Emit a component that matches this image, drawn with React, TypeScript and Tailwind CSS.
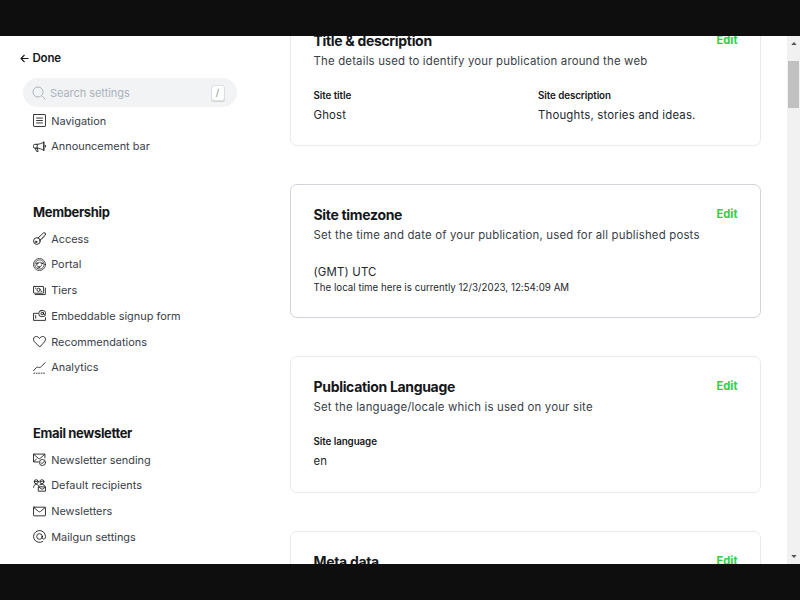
import type { ReactNode } from 'react';

function Icon({ children }: { children: ReactNode }) {
  return (
    <svg viewBox="0 0 24 24" className="h-[13px] w-[13px] shrink-0" fill="none" stroke="#15171a" strokeWidth="1.6" strokeLinecap="round" strokeLinejoin="round">
      {children}
    </svg>
  );
}

const icons: Record<string, ReactNode> = {
  navigation: (
    <>
      <rect x="1" y="1" width="22" height="22" rx="1" />
      <path d="M6.5 7.5h11M6.5 12h11M6.5 16.5h11" />
    </>
  ),
  megaphone: (
    <>
      <path d="M7 8H3.2a2.4 2.4 0 0 0-2.4 2.4v2.2A2.4 2.4 0 0 0 3.2 15H7zM7 8c4.5 0 9-1.5 13-4.3v15.6C16 16.5 11.5 15 7 15M20 3.7v15.6M23 10v3M4 15l2.6 6h3L7.7 15" />
    </>
  ),
  key: (
    <>
      <circle cx="7.2" cy="16.7" r="6.2" />
      <circle cx="5.6" cy="18.3" r="1.5" />
      <path d="M9.5 10.8 19.5 1.5l3.2.3.3 3.7-2.2 1.4-.6 2.500-2.500.6-.7 2.400-2.500.6-1.800 2" />
    </>
  ),
  portal: (
    <g strokeWidth="1.3">
      <circle cx="12" cy="12" r="11.2" />
      <circle cx="12" cy="12" r="8.6" strokeDasharray="5 1.75" />
      <path d="M9 8.500c1.500-1.200 4.500-1.200 6 0M15.700 13.500c0 2-2 3.500-4 3M8 15.500c-1.200-1-1.500-2.500-.8-4" />
      <circle cx="16.500" cy="10" r="1.400" />
      <circle cx="7.500" cy="10" r="1.400" />
      <circle cx="10.500" cy="17" r="1.400" />
    </g>
  ),
  tiers: (
    <>
      <rect x="1" y="4.500" width="18.500" height="12.500" rx="1" />
      <path d="M22.800 7.500v12H4M4.500 7.800h1M15 13.700h1" />
      <circle cx="10.300" cy="10.700" r="3" />
    </>
  ),
  embed: (
    <>
      <path d="M9.500 8H1v13h22v-5M5 12v5" />
      <rect x="11" y="3" width="12" height="11" rx="4" />
      <circle cx="17" cy="8.500" r="2.300" />
      <path d="M19.300 6.500v3.200l2 .3" />
    </>
  ),
  heart: <path d="M12 21.800 2.300 12A5.900 5.900 0 0 1 1.500 5.200C3.800 1.500 9 1.900 12 6.500c3-4.600 8.200-5 10.500-1.300a5.900 5.900 0 0 1-.8 6.800z" />,
  analytics: (
    <>
      <path d="M1 18l5.500-6.200c1.200-1.200 2.500-.3 3.800.1 1.800.6 3.500.5 4.700-1.400L22.500 3" />
      <path d="M1.500 22.500h1.500M6 22.500h1.500M10.500 22.500h1.500M15 22.500h1.500M19.500 22.500h1.500" />
    </>
  ),
  sending: (
    <>
      <path d="M10 16.500H1V2h21v7M1.500 2.500l8.200 7.300c1.200 1 2.400 1 3.600 0L21.500 2.500M1.500 16l5-5" />
      <circle cx="17.500" cy="17.500" r="5.700" />
      <path d="m14.800 17.700 2 2 3.700-4.200" />
    </>
  ),
  recipients: (
    <>
      <circle cx="6" cy="5" r="3.700" />
      <circle cx="16.500" cy="5" r="3.700" />
      <path d="M1 15.500c0-3.500 2-5.500 5-5.500 2.300 0 4 1.200 4.600 3M12.500 10.800c3.500-2 8-.8 9 1.700M2.500 4.500c2 .8 4.500.5 6-1M13 4.500c2 .8 4.500.5 6-1" />
      <path d="M10.500 14.500H23v8H10.500zM10.800 15l6 4.200 6-4.200" />
    </>
  ),
  mail: (
    <>
      <rect x="1" y="4" width="22" height="16" rx="1" />
      <path d="m1.700 4.700 8.400 7.200c1.200 1 2.600 1 3.800 0l8.400-7.200" />
    </>
  ),
  at: (
    <>
      <circle cx="12" cy="12" r="5.200" />
      <path d="M17.200 12v2.200c0 3.700 5.800 3.700 5.800-1.200V12a11 11 0 1 0-5 9.200" />
    </>
  ),
};

function NavItem({ icon, label }: { icon: string; label: string }) {
  return (
    <li className="flex h-[25.7px] items-center gap-[5.2px]">
      <Icon>{icons[icon]}</Icon>
      <span className="text-[10.9px] leading-4 tracking-[0.02px] text-[#394047]">{label}</span>
    </li>
  );
}

function NavHeading({ children }: { children: ReactNode }) {
  return <h2 className="mb-[5px] h-[18px] text-[13px] leading-[18px] font-bold tracking-[-0.35px] text-[#15171a]">{children}</h2>;
}

function Card({ title, description, className, children }: { title: string; description: string; className: string; children?: ReactNode }) {
  return (
    <section className={`shrink-0 rounded-[7px] border px-[22.5px] pt-[20px] ${className}`}>
      <header className="flex items-start justify-between whitespace-nowrap">
        <div>
          <h3 className="text-[14px] leading-5 font-bold tracking-[-0.32px] text-[#15171a]">{title}</h3>
          <p className="mt-px text-[11.4px] leading-[19px] tracking-[0.185px] text-[#394047]">{description}</p>
        </div>
        <button className="mt-px text-[11.2px] leading-4 font-bold text-[#30cf43]">Edit</button>
      </header>
      {children}
    </section>
  );
}

function Field({ label, value }: { label: string; value: string }) {
  return (
    <div>
      <h4 className="text-[9.8px] leading-[14px] font-semibold tracking-[-0.08px] text-[#15171a]">{label}</h4>
      <p className="mt-[3px] text-[11.4px] leading-[18px] tracking-[0.18px] text-[#23272c]">{value}</p>
    </div>
  );
}

export default function App() {
  return (
    <div className="flex h-[600px] w-[800px] flex-col overflow-hidden bg-[#0e0e0e] py-9 font-['Inter',sans-serif]">
      <div className="flex h-[528px] overflow-hidden bg-white">
        <aside className="w-[290px] shrink-0 pl-[23px]">
          <button className="mt-[14px] -ml-[3px] flex h-4 items-center gap-[3.5px] text-[11.5px] leading-4 font-semibold tracking-[-0.2px] text-[#15171a]">
            <svg viewBox="0 0 9 9" className="h-[9px] w-[9px]" fill="none" stroke="#15171a" strokeWidth="1.1">
              <path d="M8.500 4.500H1M4.500 1 1 4.500 4.500 8" />
            </svg>
            Done
          </button>
          <div className="mt-[12.4px] flex h-[28.6px] w-[214px] items-center rounded-full bg-[#f1f3f4] pr-[12.5px] pl-[9px]">
            <svg viewBox="0 0 14 14" className="h-[14px] w-[14px]" fill="none" stroke="#abb4be" strokeWidth="1">
              <circle cx="6" cy="6" r="5" />
              <path d="m9.600 9.600 3.900 3.900" />
            </svg>
            <span className="ml-[4px] flex-1 pt-px text-[11px] tracking-[-0.05px] text-[#abb4be]">Search settings</span>
            <kbd className="flex h-4 w-[14px] items-center justify-center rounded-[3px] border border-[#dce0e4] bg-white font-['Inter',sans-serif] text-[9.5px] text-[#7c8b9a] shadow-[0_1px_0_#ced4d9]">/</kbd>
          </div>
          <nav className="pl-[10px]">
            <ul className="mt-[0.9px]">
              <NavItem icon="navigation" label="Navigation" />
              <NavItem icon="megaphone" label="Announcement bar" />
            </ul>
            <div className="mt-[43.7px]">
              <NavHeading>Membership</NavHeading>
              <ul>
                <NavItem icon="key" label="Access" />
                <NavItem icon="portal" label="Portal" />
                <NavItem icon="tiers" label="Tiers" />
                <NavItem icon="embed" label="Embeddable signup form" />
                <NavItem icon="heart" label="Recommendations" />
                <NavItem icon="analytics" label="Analytics" />
              </ul>
            </div>
            <div className="mt-[43.8px]">
              <NavHeading>Email newsletter</NavHeading>
              <ul>
                <NavItem icon="sending" label="Newsletter sending" />
                <NavItem icon="recipients" label="Default recipients" />
                <NavItem icon="mail" label="Newsletters" />
                <NavItem icon="at" label="Mailgun settings" />
              </ul>
            </div>
          </nav>
        </aside>

        <main className="-mt-[26px] flex h-[660px] w-[471px] shrink-0 flex-col">
          <Card title="Title & description" description="The details used to identify your publication around the web" className="h-[136px] border-[#e8ebee]">
            <div className="mt-[18px] grid grid-cols-[224.5px_1fr]">
              <Field label="Site title" value="Ghost" />
              <Field label="Site description" value="Thoughts, stories and ideas." />
            </div>
          </Card>
          <Card title="Site timezone" description="Set the time and date of your publication, used for all published posts" className="mt-[38px] h-[134px] border-[#ced4d9]">
            <p className="mt-[18px] text-[11.4px] leading-[18px] tracking-[0.18px] text-[#23272c]">(GMT) UTC</p>
            <p className="text-[9.7px] leading-[14px] tracking-[0.03px] text-[#23272c]">The local time here is currently 12/3/2023, 12:54:09 AM</p>
          </Card>
          <Card title="Publication Language" description="Set the language/locale which is used on your site" className="mt-[38px] h-[136.5px] border-[#e8ebee]">
            <div className="mt-[18px]">
              <Field label="Site language" value="en" />
            </div>
          </Card>
          <Card title="Meta data" description="Extra content for search engines" className="mt-[38.5px] h-[136px] border-[#e8ebee]" />
        </main>

        <div className="ml-auto flex w-[13px] flex-col items-center bg-[#f1f1f1]">
          <svg viewBox="0 0 7 4" className="mt-[6px] h-[3px] w-[6px]">
            <path d="M0 4 3.500 0 7 4z" fill="#505050" />
          </svg>
          <div className="mt-[16px] h-[47px] w-[11px] bg-[#c1c1c1]" />
          <svg viewBox="0 0 7 4" className="mt-auto mb-[6px] h-[3px] w-[6px]">
            <path d="M0 0 3.500 4 7 0z" fill="#505050" />
          </svg>
        </div>
      </div>
    </div>
  );
}
